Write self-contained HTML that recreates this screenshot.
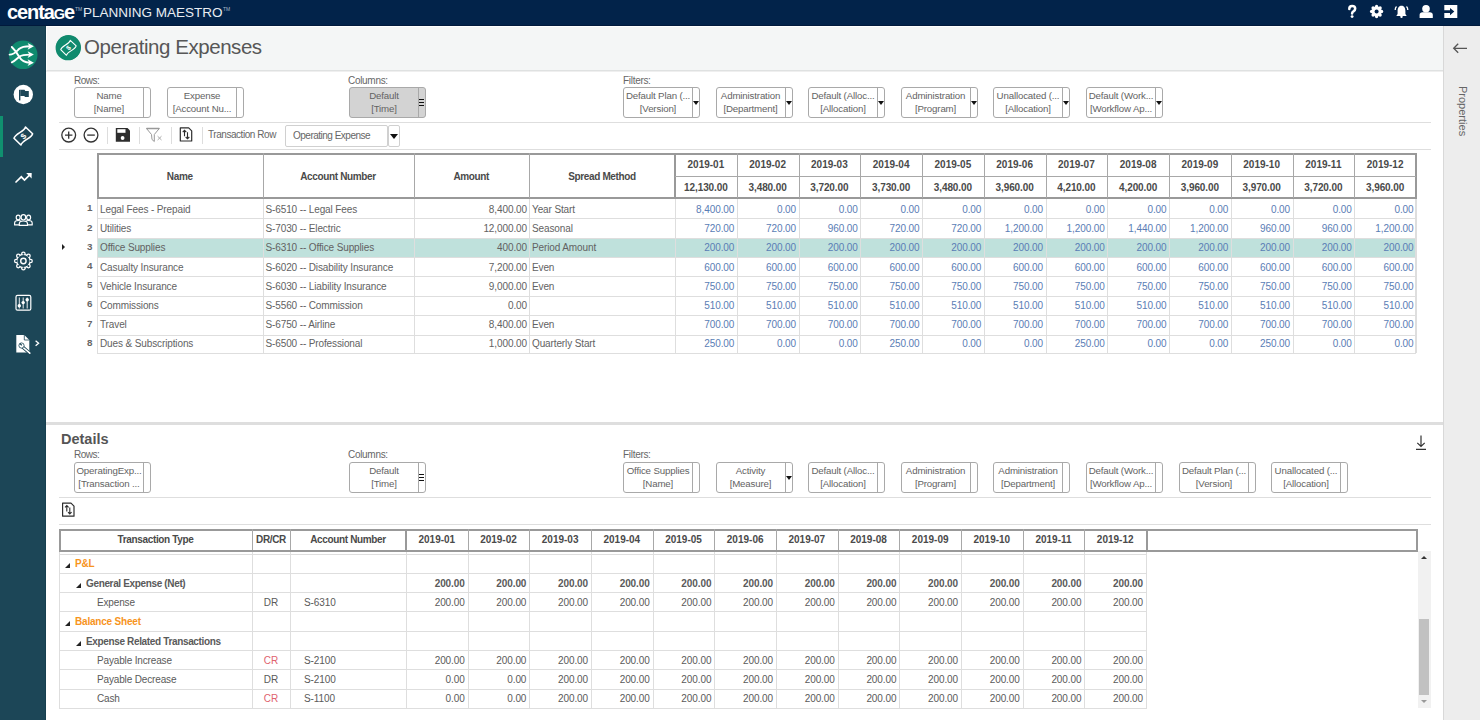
<!DOCTYPE html><html><head><meta charset="utf-8"><style>
*{box-sizing:border-box;margin:0;padding:0}
html,body{width:1480px;height:720px;overflow:hidden;background:#fff;font-family:"Liberation Sans", sans-serif;color:#555}
.abs{position:absolute}
.t{position:absolute;white-space:nowrap;font-size:10px;line-height:12px}
.pill{position:absolute;height:31px;width:77px;border:1px solid #a9a9a9;border-radius:3px;background:#fff}
.pill .d{position:absolute;right:6px;top:0;bottom:0;border-left:1px solid #a9a9a9}
.pill .l{position:absolute;left:0;right:7px;text-align:center;font-size:9.7px;line-height:13px;color:#636363;white-space:nowrap;overflow:hidden;letter-spacing:-0.15px}
.pill .tri{position:absolute;right:0px;top:13px;width:0;height:0;border-left:3.5px solid transparent;border-right:3.5px solid transparent;border-top:4px solid #111}
.gl{position:absolute;background:#dedede}
.bl{position:absolute;background:#8c8c8c}
</style></head><body>

<div class="abs" style="left:0;top:0;width:1480px;height:26px;background:#02234a;border-bottom:1px solid #011a3c"></div>
<div class="t" style="left:7px;top:0px;font-size:20px;line-height:24px;font-weight:bold;color:#fff;letter-spacing:-1.1px">centa<span style="font-size:14.5px">G</span>e</div>
<div class="t" style="left:75px;top:6px;font-size:5px;line-height:6px;color:#a9b5c6">TM</div>
<div class="t" style="left:83px;top:5px;font-size:13.5px;line-height:16px;color:#e9edf2">PLANNING MAESTRO</div>
<div class="t" style="left:223px;top:6px;font-size:5px;line-height:6px;color:#a9b5c6">TM</div>
<div class="abs" style="left:0;top:26px;width:46px;height:694px;background:#1c4657;border-right:1px solid #163f4f"></div>
<div class="abs" style="left:0;top:116px;width:3px;height:41px;background:#10906f"></div>
<div class="abs" style="left:46px;top:26px;width:1397px;height:45px;background:#f4f6f6;border-top:1px solid #fff;border-left:1px solid #fff;border-bottom:1px solid #dfe1e1;box-shadow:0 1px 0 #efefef"></div>
<div class="abs" style="left:1443px;top:26px;width:37px;height:694px;background:#ededed;border-left:1px solid #d8d8d8"></div>
<svg class="abs" style="left:1450px;top:40px" width="20" height="16" viewBox="1450 40 20 16"><path d="M1453.6 48.3 H1467 M1458.2 43.8 L1453.7 48.3 L1458.2 52.8" fill="none" stroke="#555" stroke-width="1.3"/></svg>
<div class="t" style="left:1456px;top:86px;font-size:11px;line-height:14px;color:#666;transform-origin:0 0;transform:translate(14px,0) rotate(90deg)">Properties</div>
<div class="abs" style="left:56px;top:35px;width:25px;height:25px;border-radius:50%;background:#12876b"></div>
<div class="t" style="left:84px;top:35px;font-size:20.5px;line-height:24px;color:#575757;letter-spacing:-0.45px">Operating Expenses</div>
<div class="t" style="left:74px;top:74.5px;color:#666;letter-spacing:-0.5px">Rows:</div>
<div class="t" style="left:348px;top:74.5px;color:#666;letter-spacing:-0.3px">Columns:</div>
<div class="t" style="left:623px;top:74.5px;color:#666;letter-spacing:-0.3px">Filters:</div>
<div class="pill" style="left:74px;top:87px;background:#fff"><div class="d"></div><div class="l" style="top:1.3px">Name</div><div class="l" style="top:13.9px">[Name]</div></div>
<div class="pill" style="left:167px;top:87px;background:#fff"><div class="d"></div><div class="l" style="top:1.3px">Expense</div><div class="l" style="top:13.9px">[Account Nu...</div></div>
<div class="pill" style="left:349px;top:87px;background:#d3d3d3"><div class="d"></div><div class="l" style="top:1.3px">Default</div><div class="l" style="top:13.9px">[Time]</div><div class="abs" style="right:1px;top:11px;width:5px;height:7px;border-top:1.5px solid #111;border-bottom:1.5px solid #111"><div class="abs" style="left:0;top:1.5px;width:5px;height:1.5px;background:#111"></div></div></div>
<div class="pill" style="left:623px;top:87px;background:#fff"><div class="d"></div><div class="l" style="top:1.3px">Default Plan (...</div><div class="l" style="top:13.9px">[Version]</div><div class="tri"></div></div>
<div class="pill" style="left:715.5px;top:87px;background:#fff"><div class="d"></div><div class="l" style="top:1.3px">Administration</div><div class="l" style="top:13.9px">[Department]</div><div class="tri"></div></div>
<div class="pill" style="left:808px;top:87px;background:#fff"><div class="d"></div><div class="l" style="top:1.3px">Default (Alloc...</div><div class="l" style="top:13.9px">[Allocation]</div><div class="tri"></div></div>
<div class="pill" style="left:900.5px;top:87px;background:#fff"><div class="d"></div><div class="l" style="top:1.3px">Administration</div><div class="l" style="top:13.9px">[Program]</div><div class="tri"></div></div>
<div class="pill" style="left:993px;top:87px;background:#fff"><div class="d"></div><div class="l" style="top:1.3px">Unallocated (...</div><div class="l" style="top:13.9px">[Allocation]</div><div class="tri"></div></div>
<div class="pill" style="left:1086px;top:87px;background:#fff"><div class="d"></div><div class="l" style="top:1.3px">Default (Work...</div><div class="l" style="top:13.9px">[Workflow Ap...</div><div class="tri"></div></div>
<div class="gl" style="left:59px;top:122px;width:1372px;height:1px"></div>
<div class="gl" style="left:59px;top:149px;width:1372px;height:1px"></div>
<div class="abs" style="left:107px;top:127px;width:1px;height:17px;background:#ddd"></div>
<div class="abs" style="left:139px;top:127px;width:1px;height:17px;background:#ddd"></div>
<div class="abs" style="left:171px;top:127px;width:1px;height:17px;background:#ddd"></div>
<div class="abs" style="left:202px;top:127px;width:1px;height:17px;background:#ddd"></div>
<div class="t" style="left:208px;top:129px;color:#666;letter-spacing:-0.45px">Transaction Row</div>
<div class="abs" style="left:285px;top:125px;width:103px;height:22px;border:1px solid #d0d0d0;border-radius:2px"></div>
<div class="t" style="left:293px;top:130px;color:#666;letter-spacing:-0.5px">Operating Expense</div>
<div class="abs" style="left:388px;top:125px;width:12px;height:22px;border:1px solid #d0d0d0;border-radius:2px"></div>
<div class="abs" style="left:390px;top:134px;width:0;height:0;border-left:4px solid transparent;border-right:4px solid transparent;border-top:5px solid #111"></div>
<div class="abs" style="left:98px;top:238.1px;width:1317px;height:19.400000000000006px;background:#bfe1dc"></div>
<div class="gl" style="left:97px;top:218.00px;width:1319px;height:1px"></div>
<div class="gl" style="left:97px;top:237.60px;width:1319px;height:1px"></div>
<div class="gl" style="left:97px;top:257.00px;width:1319px;height:1px"></div>
<div class="gl" style="left:97px;top:276.30px;width:1319px;height:1px"></div>
<div class="gl" style="left:97px;top:295.80px;width:1319px;height:1px"></div>
<div class="gl" style="left:97px;top:315.30px;width:1319px;height:1px"></div>
<div class="gl" style="left:97px;top:334.60px;width:1319px;height:1px"></div>
<div class="gl" style="left:97px;top:352.60px;width:1319px;height:1px"></div>
<div class="gl" style="left:97.00px;top:198px;width:1px;height:154.60px"></div>
<div class="gl" style="left:262.50px;top:198px;width:1px;height:154.60px"></div>
<div class="gl" style="left:413.50px;top:198px;width:1px;height:154.60px"></div>
<div class="gl" style="left:529.00px;top:198px;width:1px;height:154.60px"></div>
<div class="gl" style="left:675.00px;top:198px;width:1px;height:154.60px"></div>
<div class="gl" style="left:736.75px;top:198px;width:1px;height:154.60px"></div>
<div class="gl" style="left:798.50px;top:198px;width:1px;height:154.60px"></div>
<div class="gl" style="left:860.25px;top:198px;width:1px;height:154.60px"></div>
<div class="gl" style="left:922.00px;top:198px;width:1px;height:154.60px"></div>
<div class="gl" style="left:983.75px;top:198px;width:1px;height:154.60px"></div>
<div class="gl" style="left:1045.50px;top:198px;width:1px;height:154.60px"></div>
<div class="gl" style="left:1107.25px;top:198px;width:1px;height:154.60px"></div>
<div class="gl" style="left:1169.00px;top:198px;width:1px;height:154.60px"></div>
<div class="gl" style="left:1230.75px;top:198px;width:1px;height:154.60px"></div>
<div class="gl" style="left:1292.50px;top:198px;width:1px;height:154.60px"></div>
<div class="gl" style="left:1354.25px;top:198px;width:1px;height:154.60px"></div>
<div class="gl" style="left:1416.00px;top:198px;width:1px;height:154.60px"></div>
<div class="gl" style="left:1415px;top:198px;width:1px;height:154.60px"></div>
<div class="abs" style="left:97px;top:153px;width:1320px;height:46px;border:2px solid #999"></div>
<div class="abs" style="left:262.50px;top:153px;width:1px;height:45px;background:#a8a8a8"></div>
<div class="abs" style="left:413.50px;top:153px;width:1px;height:45px;background:#a8a8a8"></div>
<div class="abs" style="left:529.00px;top:153px;width:1px;height:45px;background:#a8a8a8"></div>
<div class="abs" style="left:674px;top:153px;width:2px;height:45px;background:#999"></div>
<div class="abs" style="left:736.75px;top:153px;width:1px;height:45px;background:#a8a8a8"></div>
<div class="abs" style="left:798.50px;top:153px;width:1px;height:45px;background:#a8a8a8"></div>
<div class="abs" style="left:860.25px;top:153px;width:1px;height:45px;background:#a8a8a8"></div>
<div class="abs" style="left:922.00px;top:153px;width:1px;height:45px;background:#a8a8a8"></div>
<div class="abs" style="left:983.75px;top:153px;width:1px;height:45px;background:#a8a8a8"></div>
<div class="abs" style="left:1045.50px;top:153px;width:1px;height:45px;background:#a8a8a8"></div>
<div class="abs" style="left:1107.25px;top:153px;width:1px;height:45px;background:#a8a8a8"></div>
<div class="abs" style="left:1169.00px;top:153px;width:1px;height:45px;background:#a8a8a8"></div>
<div class="abs" style="left:1230.75px;top:153px;width:1px;height:45px;background:#a8a8a8"></div>
<div class="abs" style="left:1292.50px;top:153px;width:1px;height:45px;background:#a8a8a8"></div>
<div class="abs" style="left:1354.25px;top:153px;width:1px;height:45px;background:#a8a8a8"></div>
<div class="abs" style="left:675px;top:176px;width:741px;height:1px;background:#a8a8a8"></div>
<div class="t" style="left:97.00px;top:170.5px;width:165.50px;text-align:center;font-weight:bold;color:#4a4a4a;letter-spacing:-0.35px">Name</div>
<div class="t" style="left:262.50px;top:170.5px;width:151.00px;text-align:center;font-weight:bold;color:#4a4a4a;letter-spacing:-0.35px">Account Number</div>
<div class="t" style="left:413.50px;top:170.5px;width:115.50px;text-align:center;font-weight:bold;color:#4a4a4a;letter-spacing:-0.35px">Amount</div>
<div class="t" style="left:529.00px;top:170.5px;width:146.00px;text-align:center;font-weight:bold;color:#4a4a4a;letter-spacing:-0.35px">Spread Method</div>
<div class="t" style="left:675.00px;top:159px;width:61.75px;text-align:center;font-weight:bold;color:#4a4a4a;letter-spacing:0px">2019-01</div>
<div class="t" style="left:675.00px;top:182px;width:61.75px;text-align:center;font-weight:bold;color:#4a4a4a;letter-spacing:-0.1px">12,130.00</div>
<div class="t" style="left:736.75px;top:159px;width:61.75px;text-align:center;font-weight:bold;color:#4a4a4a;letter-spacing:0px">2019-02</div>
<div class="t" style="left:736.75px;top:182px;width:61.75px;text-align:center;font-weight:bold;color:#4a4a4a;letter-spacing:-0.1px">3,480.00</div>
<div class="t" style="left:798.50px;top:159px;width:61.75px;text-align:center;font-weight:bold;color:#4a4a4a;letter-spacing:0px">2019-03</div>
<div class="t" style="left:798.50px;top:182px;width:61.75px;text-align:center;font-weight:bold;color:#4a4a4a;letter-spacing:-0.1px">3,720.00</div>
<div class="t" style="left:860.25px;top:159px;width:61.75px;text-align:center;font-weight:bold;color:#4a4a4a;letter-spacing:0px">2019-04</div>
<div class="t" style="left:860.25px;top:182px;width:61.75px;text-align:center;font-weight:bold;color:#4a4a4a;letter-spacing:-0.1px">3,730.00</div>
<div class="t" style="left:922.00px;top:159px;width:61.75px;text-align:center;font-weight:bold;color:#4a4a4a;letter-spacing:0px">2019-05</div>
<div class="t" style="left:922.00px;top:182px;width:61.75px;text-align:center;font-weight:bold;color:#4a4a4a;letter-spacing:-0.1px">3,480.00</div>
<div class="t" style="left:983.75px;top:159px;width:61.75px;text-align:center;font-weight:bold;color:#4a4a4a;letter-spacing:0px">2019-06</div>
<div class="t" style="left:983.75px;top:182px;width:61.75px;text-align:center;font-weight:bold;color:#4a4a4a;letter-spacing:-0.1px">3,960.00</div>
<div class="t" style="left:1045.50px;top:159px;width:61.75px;text-align:center;font-weight:bold;color:#4a4a4a;letter-spacing:0px">2019-07</div>
<div class="t" style="left:1045.50px;top:182px;width:61.75px;text-align:center;font-weight:bold;color:#4a4a4a;letter-spacing:-0.1px">4,210.00</div>
<div class="t" style="left:1107.25px;top:159px;width:61.75px;text-align:center;font-weight:bold;color:#4a4a4a;letter-spacing:0px">2019-08</div>
<div class="t" style="left:1107.25px;top:182px;width:61.75px;text-align:center;font-weight:bold;color:#4a4a4a;letter-spacing:-0.1px">4,200.00</div>
<div class="t" style="left:1169.00px;top:159px;width:61.75px;text-align:center;font-weight:bold;color:#4a4a4a;letter-spacing:0px">2019-09</div>
<div class="t" style="left:1169.00px;top:182px;width:61.75px;text-align:center;font-weight:bold;color:#4a4a4a;letter-spacing:-0.1px">3,960.00</div>
<div class="t" style="left:1230.75px;top:159px;width:61.75px;text-align:center;font-weight:bold;color:#4a4a4a;letter-spacing:0px">2019-10</div>
<div class="t" style="left:1230.75px;top:182px;width:61.75px;text-align:center;font-weight:bold;color:#4a4a4a;letter-spacing:-0.1px">3,970.00</div>
<div class="t" style="left:1292.50px;top:159px;width:61.75px;text-align:center;font-weight:bold;color:#4a4a4a;letter-spacing:0px">2019-11</div>
<div class="t" style="left:1292.50px;top:182px;width:61.75px;text-align:center;font-weight:bold;color:#4a4a4a;letter-spacing:-0.1px">3,720.00</div>
<div class="t" style="left:1354.25px;top:159px;width:61.75px;text-align:center;font-weight:bold;color:#4a4a4a;letter-spacing:0px">2019-12</div>
<div class="t" style="left:1354.25px;top:182px;width:61.75px;text-align:center;font-weight:bold;color:#4a4a4a;letter-spacing:-0.1px">3,960.00</div>
<div class="t" style="right:1387.50px;top:202.4px;text-align:right;font-weight:bold;color:#666;font-size:9.8px">1</div>
<div class="t" style="left:100.00px;top:203.9px;color:#626262;letter-spacing:-0.12px">Legal Fees - Prepaid</div>
<div class="t" style="left:265.50px;top:203.9px;color:#626262;letter-spacing:-0.12px">S-6510 -- Legal Fees</div>
<div class="t" style="right:953.00px;top:203.9px;text-align:right;color:#626262;letter-spacing:-0.1px">8,400.00</div>
<div class="t" style="left:532.00px;top:203.9px;color:#626262;letter-spacing:-0.12px">Year Start</div>
<div class="t" style="right:745.75px;top:203.9px;text-align:right;color:#5a7db5;letter-spacing:-0.1px">8,400.00</div>
<div class="t" style="right:684.00px;top:203.9px;text-align:right;color:#5a7db5;letter-spacing:-0.1px">0.00</div>
<div class="t" style="right:622.25px;top:203.9px;text-align:right;color:#5a7db5;letter-spacing:-0.1px">0.00</div>
<div class="t" style="right:560.50px;top:203.9px;text-align:right;color:#5a7db5;letter-spacing:-0.1px">0.00</div>
<div class="t" style="right:498.75px;top:203.9px;text-align:right;color:#5a7db5;letter-spacing:-0.1px">0.00</div>
<div class="t" style="right:437.00px;top:203.9px;text-align:right;color:#5a7db5;letter-spacing:-0.1px">0.00</div>
<div class="t" style="right:375.25px;top:203.9px;text-align:right;color:#5a7db5;letter-spacing:-0.1px">0.00</div>
<div class="t" style="right:313.50px;top:203.9px;text-align:right;color:#5a7db5;letter-spacing:-0.1px">0.00</div>
<div class="t" style="right:251.75px;top:203.9px;text-align:right;color:#5a7db5;letter-spacing:-0.1px">0.00</div>
<div class="t" style="right:190.00px;top:203.9px;text-align:right;color:#5a7db5;letter-spacing:-0.1px">0.00</div>
<div class="t" style="right:128.25px;top:203.9px;text-align:right;color:#5a7db5;letter-spacing:-0.1px">0.00</div>
<div class="t" style="right:66.50px;top:203.9px;text-align:right;color:#5a7db5;letter-spacing:-0.1px">0.00</div>
<div class="t" style="right:1387.50px;top:221.6px;text-align:right;font-weight:bold;color:#666;font-size:9.8px">2</div>
<div class="t" style="left:100.00px;top:223.1px;color:#626262;letter-spacing:-0.12px">Utilities</div>
<div class="t" style="left:265.50px;top:223.1px;color:#626262;letter-spacing:-0.12px">S-7030 -- Electric</div>
<div class="t" style="right:953.00px;top:223.1px;text-align:right;color:#626262;letter-spacing:-0.1px">12,000.00</div>
<div class="t" style="left:532.00px;top:223.1px;color:#626262;letter-spacing:-0.12px">Seasonal</div>
<div class="t" style="right:745.75px;top:223.1px;text-align:right;color:#5a7db5;letter-spacing:-0.1px">720.00</div>
<div class="t" style="right:684.00px;top:223.1px;text-align:right;color:#5a7db5;letter-spacing:-0.1px">720.00</div>
<div class="t" style="right:622.25px;top:223.1px;text-align:right;color:#5a7db5;letter-spacing:-0.1px">960.00</div>
<div class="t" style="right:560.50px;top:223.1px;text-align:right;color:#5a7db5;letter-spacing:-0.1px">720.00</div>
<div class="t" style="right:498.75px;top:223.1px;text-align:right;color:#5a7db5;letter-spacing:-0.1px">720.00</div>
<div class="t" style="right:437.00px;top:223.1px;text-align:right;color:#5a7db5;letter-spacing:-0.1px">1,200.00</div>
<div class="t" style="right:375.25px;top:223.1px;text-align:right;color:#5a7db5;letter-spacing:-0.1px">1,200.00</div>
<div class="t" style="right:313.50px;top:223.1px;text-align:right;color:#5a7db5;letter-spacing:-0.1px">1,440.00</div>
<div class="t" style="right:251.75px;top:223.1px;text-align:right;color:#5a7db5;letter-spacing:-0.1px">1,200.00</div>
<div class="t" style="right:190.00px;top:223.1px;text-align:right;color:#5a7db5;letter-spacing:-0.1px">960.00</div>
<div class="t" style="right:128.25px;top:223.1px;text-align:right;color:#5a7db5;letter-spacing:-0.1px">960.00</div>
<div class="t" style="right:66.50px;top:223.1px;text-align:right;color:#5a7db5;letter-spacing:-0.1px">1,200.00</div>
<div class="t" style="right:1387.50px;top:240.8px;text-align:right;font-weight:bold;color:#666;font-size:9.8px">3</div>
<div class="t" style="left:100.00px;top:242.3px;color:#626262;letter-spacing:-0.12px">Office Supplies</div>
<div class="t" style="left:265.50px;top:242.3px;color:#626262;letter-spacing:-0.12px">S-6310 -- Office Supplies</div>
<div class="t" style="right:953.00px;top:242.3px;text-align:right;color:#626262;letter-spacing:-0.1px">400.00</div>
<div class="t" style="left:532.00px;top:242.3px;color:#626262;letter-spacing:-0.12px">Period Amount</div>
<div class="t" style="right:745.75px;top:242.3px;text-align:right;color:#5a7db5;letter-spacing:-0.1px">200.00</div>
<div class="t" style="right:684.00px;top:242.3px;text-align:right;color:#5a7db5;letter-spacing:-0.1px">200.00</div>
<div class="t" style="right:622.25px;top:242.3px;text-align:right;color:#5a7db5;letter-spacing:-0.1px">200.00</div>
<div class="t" style="right:560.50px;top:242.3px;text-align:right;color:#5a7db5;letter-spacing:-0.1px">200.00</div>
<div class="t" style="right:498.75px;top:242.3px;text-align:right;color:#5a7db5;letter-spacing:-0.1px">200.00</div>
<div class="t" style="right:437.00px;top:242.3px;text-align:right;color:#5a7db5;letter-spacing:-0.1px">200.00</div>
<div class="t" style="right:375.25px;top:242.3px;text-align:right;color:#5a7db5;letter-spacing:-0.1px">200.00</div>
<div class="t" style="right:313.50px;top:242.3px;text-align:right;color:#5a7db5;letter-spacing:-0.1px">200.00</div>
<div class="t" style="right:251.75px;top:242.3px;text-align:right;color:#5a7db5;letter-spacing:-0.1px">200.00</div>
<div class="t" style="right:190.00px;top:242.3px;text-align:right;color:#5a7db5;letter-spacing:-0.1px">200.00</div>
<div class="t" style="right:128.25px;top:242.3px;text-align:right;color:#5a7db5;letter-spacing:-0.1px">200.00</div>
<div class="t" style="right:66.50px;top:242.3px;text-align:right;color:#5a7db5;letter-spacing:-0.1px">200.00</div>
<div class="t" style="right:1387.50px;top:260.0px;text-align:right;font-weight:bold;color:#666;font-size:9.8px">4</div>
<div class="t" style="left:100.00px;top:261.5px;color:#626262;letter-spacing:-0.12px">Casualty Insurance</div>
<div class="t" style="left:265.50px;top:261.5px;color:#626262;letter-spacing:-0.12px">S-6020 -- Disability Insurance</div>
<div class="t" style="right:953.00px;top:261.5px;text-align:right;color:#626262;letter-spacing:-0.1px">7,200.00</div>
<div class="t" style="left:532.00px;top:261.5px;color:#626262;letter-spacing:-0.12px">Even</div>
<div class="t" style="right:745.75px;top:261.5px;text-align:right;color:#5a7db5;letter-spacing:-0.1px">600.00</div>
<div class="t" style="right:684.00px;top:261.5px;text-align:right;color:#5a7db5;letter-spacing:-0.1px">600.00</div>
<div class="t" style="right:622.25px;top:261.5px;text-align:right;color:#5a7db5;letter-spacing:-0.1px">600.00</div>
<div class="t" style="right:560.50px;top:261.5px;text-align:right;color:#5a7db5;letter-spacing:-0.1px">600.00</div>
<div class="t" style="right:498.75px;top:261.5px;text-align:right;color:#5a7db5;letter-spacing:-0.1px">600.00</div>
<div class="t" style="right:437.00px;top:261.5px;text-align:right;color:#5a7db5;letter-spacing:-0.1px">600.00</div>
<div class="t" style="right:375.25px;top:261.5px;text-align:right;color:#5a7db5;letter-spacing:-0.1px">600.00</div>
<div class="t" style="right:313.50px;top:261.5px;text-align:right;color:#5a7db5;letter-spacing:-0.1px">600.00</div>
<div class="t" style="right:251.75px;top:261.5px;text-align:right;color:#5a7db5;letter-spacing:-0.1px">600.00</div>
<div class="t" style="right:190.00px;top:261.5px;text-align:right;color:#5a7db5;letter-spacing:-0.1px">600.00</div>
<div class="t" style="right:128.25px;top:261.5px;text-align:right;color:#5a7db5;letter-spacing:-0.1px">600.00</div>
<div class="t" style="right:66.50px;top:261.5px;text-align:right;color:#5a7db5;letter-spacing:-0.1px">600.00</div>
<div class="t" style="right:1387.50px;top:279.2px;text-align:right;font-weight:bold;color:#666;font-size:9.8px">5</div>
<div class="t" style="left:100.00px;top:280.7px;color:#626262;letter-spacing:-0.12px">Vehicle Insurance</div>
<div class="t" style="left:265.50px;top:280.7px;color:#626262;letter-spacing:-0.12px">S-6030 -- Liability Insurance</div>
<div class="t" style="right:953.00px;top:280.7px;text-align:right;color:#626262;letter-spacing:-0.1px">9,000.00</div>
<div class="t" style="left:532.00px;top:280.7px;color:#626262;letter-spacing:-0.12px">Even</div>
<div class="t" style="right:745.75px;top:280.7px;text-align:right;color:#5a7db5;letter-spacing:-0.1px">750.00</div>
<div class="t" style="right:684.00px;top:280.7px;text-align:right;color:#5a7db5;letter-spacing:-0.1px">750.00</div>
<div class="t" style="right:622.25px;top:280.7px;text-align:right;color:#5a7db5;letter-spacing:-0.1px">750.00</div>
<div class="t" style="right:560.50px;top:280.7px;text-align:right;color:#5a7db5;letter-spacing:-0.1px">750.00</div>
<div class="t" style="right:498.75px;top:280.7px;text-align:right;color:#5a7db5;letter-spacing:-0.1px">750.00</div>
<div class="t" style="right:437.00px;top:280.7px;text-align:right;color:#5a7db5;letter-spacing:-0.1px">750.00</div>
<div class="t" style="right:375.25px;top:280.7px;text-align:right;color:#5a7db5;letter-spacing:-0.1px">750.00</div>
<div class="t" style="right:313.50px;top:280.7px;text-align:right;color:#5a7db5;letter-spacing:-0.1px">750.00</div>
<div class="t" style="right:251.75px;top:280.7px;text-align:right;color:#5a7db5;letter-spacing:-0.1px">750.00</div>
<div class="t" style="right:190.00px;top:280.7px;text-align:right;color:#5a7db5;letter-spacing:-0.1px">750.00</div>
<div class="t" style="right:128.25px;top:280.7px;text-align:right;color:#5a7db5;letter-spacing:-0.1px">750.00</div>
<div class="t" style="right:66.50px;top:280.7px;text-align:right;color:#5a7db5;letter-spacing:-0.1px">750.00</div>
<div class="t" style="right:1387.50px;top:298.4px;text-align:right;font-weight:bold;color:#666;font-size:9.8px">6</div>
<div class="t" style="left:100.00px;top:299.9px;color:#626262;letter-spacing:-0.12px">Commissions</div>
<div class="t" style="left:265.50px;top:299.9px;color:#626262;letter-spacing:-0.12px">S-5560 -- Commission</div>
<div class="t" style="right:953.00px;top:299.9px;text-align:right;color:#626262;letter-spacing:-0.1px">0.00</div>
<div class="t" style="left:532.00px;top:299.9px;color:#626262;letter-spacing:-0.12px"></div>
<div class="t" style="right:745.75px;top:299.9px;text-align:right;color:#5a7db5;letter-spacing:-0.1px">510.00</div>
<div class="t" style="right:684.00px;top:299.9px;text-align:right;color:#5a7db5;letter-spacing:-0.1px">510.00</div>
<div class="t" style="right:622.25px;top:299.9px;text-align:right;color:#5a7db5;letter-spacing:-0.1px">510.00</div>
<div class="t" style="right:560.50px;top:299.9px;text-align:right;color:#5a7db5;letter-spacing:-0.1px">510.00</div>
<div class="t" style="right:498.75px;top:299.9px;text-align:right;color:#5a7db5;letter-spacing:-0.1px">510.00</div>
<div class="t" style="right:437.00px;top:299.9px;text-align:right;color:#5a7db5;letter-spacing:-0.1px">510.00</div>
<div class="t" style="right:375.25px;top:299.9px;text-align:right;color:#5a7db5;letter-spacing:-0.1px">510.00</div>
<div class="t" style="right:313.50px;top:299.9px;text-align:right;color:#5a7db5;letter-spacing:-0.1px">510.00</div>
<div class="t" style="right:251.75px;top:299.9px;text-align:right;color:#5a7db5;letter-spacing:-0.1px">510.00</div>
<div class="t" style="right:190.00px;top:299.9px;text-align:right;color:#5a7db5;letter-spacing:-0.1px">510.00</div>
<div class="t" style="right:128.25px;top:299.9px;text-align:right;color:#5a7db5;letter-spacing:-0.1px">510.00</div>
<div class="t" style="right:66.50px;top:299.9px;text-align:right;color:#5a7db5;letter-spacing:-0.1px">510.00</div>
<div class="t" style="right:1387.50px;top:317.6px;text-align:right;font-weight:bold;color:#666;font-size:9.8px">7</div>
<div class="t" style="left:100.00px;top:319.1px;color:#626262;letter-spacing:-0.12px">Travel</div>
<div class="t" style="left:265.50px;top:319.1px;color:#626262;letter-spacing:-0.12px">S-6750 -- Airline</div>
<div class="t" style="right:953.00px;top:319.1px;text-align:right;color:#626262;letter-spacing:-0.1px">8,400.00</div>
<div class="t" style="left:532.00px;top:319.1px;color:#626262;letter-spacing:-0.12px">Even</div>
<div class="t" style="right:745.75px;top:319.1px;text-align:right;color:#5a7db5;letter-spacing:-0.1px">700.00</div>
<div class="t" style="right:684.00px;top:319.1px;text-align:right;color:#5a7db5;letter-spacing:-0.1px">700.00</div>
<div class="t" style="right:622.25px;top:319.1px;text-align:right;color:#5a7db5;letter-spacing:-0.1px">700.00</div>
<div class="t" style="right:560.50px;top:319.1px;text-align:right;color:#5a7db5;letter-spacing:-0.1px">700.00</div>
<div class="t" style="right:498.75px;top:319.1px;text-align:right;color:#5a7db5;letter-spacing:-0.1px">700.00</div>
<div class="t" style="right:437.00px;top:319.1px;text-align:right;color:#5a7db5;letter-spacing:-0.1px">700.00</div>
<div class="t" style="right:375.25px;top:319.1px;text-align:right;color:#5a7db5;letter-spacing:-0.1px">700.00</div>
<div class="t" style="right:313.50px;top:319.1px;text-align:right;color:#5a7db5;letter-spacing:-0.1px">700.00</div>
<div class="t" style="right:251.75px;top:319.1px;text-align:right;color:#5a7db5;letter-spacing:-0.1px">700.00</div>
<div class="t" style="right:190.00px;top:319.1px;text-align:right;color:#5a7db5;letter-spacing:-0.1px">700.00</div>
<div class="t" style="right:128.25px;top:319.1px;text-align:right;color:#5a7db5;letter-spacing:-0.1px">700.00</div>
<div class="t" style="right:66.50px;top:319.1px;text-align:right;color:#5a7db5;letter-spacing:-0.1px">700.00</div>
<div class="t" style="right:1387.50px;top:336.8px;text-align:right;font-weight:bold;color:#666;font-size:9.8px">8</div>
<div class="t" style="left:100.00px;top:338.3px;color:#626262;letter-spacing:-0.12px">Dues & Subscriptions</div>
<div class="t" style="left:265.50px;top:338.3px;color:#626262;letter-spacing:-0.12px">S-6500 -- Professional</div>
<div class="t" style="right:953.00px;top:338.3px;text-align:right;color:#626262;letter-spacing:-0.1px">1,000.00</div>
<div class="t" style="left:532.00px;top:338.3px;color:#626262;letter-spacing:-0.12px">Quarterly Start</div>
<div class="t" style="right:745.75px;top:338.3px;text-align:right;color:#5a7db5;letter-spacing:-0.1px">250.00</div>
<div class="t" style="right:684.00px;top:338.3px;text-align:right;color:#5a7db5;letter-spacing:-0.1px">0.00</div>
<div class="t" style="right:622.25px;top:338.3px;text-align:right;color:#5a7db5;letter-spacing:-0.1px">0.00</div>
<div class="t" style="right:560.50px;top:338.3px;text-align:right;color:#5a7db5;letter-spacing:-0.1px">250.00</div>
<div class="t" style="right:498.75px;top:338.3px;text-align:right;color:#5a7db5;letter-spacing:-0.1px">0.00</div>
<div class="t" style="right:437.00px;top:338.3px;text-align:right;color:#5a7db5;letter-spacing:-0.1px">0.00</div>
<div class="t" style="right:375.25px;top:338.3px;text-align:right;color:#5a7db5;letter-spacing:-0.1px">250.00</div>
<div class="t" style="right:313.50px;top:338.3px;text-align:right;color:#5a7db5;letter-spacing:-0.1px">0.00</div>
<div class="t" style="right:251.75px;top:338.3px;text-align:right;color:#5a7db5;letter-spacing:-0.1px">0.00</div>
<div class="t" style="right:190.00px;top:338.3px;text-align:right;color:#5a7db5;letter-spacing:-0.1px">250.00</div>
<div class="t" style="right:128.25px;top:338.3px;text-align:right;color:#5a7db5;letter-spacing:-0.1px">0.00</div>
<div class="t" style="right:66.50px;top:338.3px;text-align:right;color:#5a7db5;letter-spacing:-0.1px">0.00</div>
<div class="abs" style="left:62px;top:243.6px;width:0;height:0;border-top:3px solid transparent;border-bottom:3px solid transparent;border-left:3.5px solid #222"></div>
<div class="abs" style="left:46px;top:422px;width:1397px;height:3px;background:#dedede"></div>
<div class="t" style="left:61px;top:431px;font-size:14.5px;line-height:16px;font-weight:bold;color:#555">Details</div>
<div class="t" style="left:74px;top:449px;color:#666;letter-spacing:-0.5px">Rows:</div>
<div class="t" style="left:348px;top:449px;color:#666;letter-spacing:-0.3px">Columns:</div>
<div class="t" style="left:623px;top:449px;color:#666;letter-spacing:-0.3px">Filters:</div>
<div class="pill" style="left:74px;top:462px;background:#fff"><div class="d"></div><div class="l" style="top:1.3px">OperatingExp...</div><div class="l" style="top:13.9px">[Transaction ...</div></div>
<div class="pill" style="left:349px;top:462px;background:#fff"><div class="d"></div><div class="l" style="top:1.3px">Default</div><div class="l" style="top:13.9px">[Time]</div><div class="abs" style="right:1px;top:11px;width:5px;height:7px;border-top:1.5px solid #111;border-bottom:1.5px solid #111"><div class="abs" style="left:0;top:1.5px;width:5px;height:1.5px;background:#111"></div></div></div>
<div class="pill" style="left:623px;top:462px;background:#fff"><div class="d"></div><div class="l" style="top:1.3px">Office Supplies</div><div class="l" style="top:13.9px">[Name]</div></div>
<div class="pill" style="left:715.5px;top:462px;background:#fff"><div class="d"></div><div class="l" style="top:1.3px">Activity</div><div class="l" style="top:13.9px">[Measure]</div><div class="tri"></div></div>
<div class="pill" style="left:808px;top:462px;background:#fff"><div class="d"></div><div class="l" style="top:1.3px">Default (Alloc...</div><div class="l" style="top:13.9px">[Allocation]</div></div>
<div class="pill" style="left:900.5px;top:462px;background:#fff"><div class="d"></div><div class="l" style="top:1.3px">Administration</div><div class="l" style="top:13.9px">[Program]</div></div>
<div class="pill" style="left:993px;top:462px;background:#fff"><div class="d"></div><div class="l" style="top:1.3px">Administration</div><div class="l" style="top:13.9px">[Department]</div></div>
<div class="pill" style="left:1086px;top:462px;background:#fff"><div class="d"></div><div class="l" style="top:1.3px">Default (Work...</div><div class="l" style="top:13.9px">[Workflow Ap...</div></div>
<div class="pill" style="left:1179px;top:462px;background:#fff"><div class="d"></div><div class="l" style="top:1.3px">Default Plan (...</div><div class="l" style="top:13.9px">[Version]</div></div>
<div class="pill" style="left:1271px;top:462px;background:#fff"><div class="d"></div><div class="l" style="top:1.3px">Unallocated (...</div><div class="l" style="top:13.9px">[Allocation]</div></div>
<div class="gl" style="left:59px;top:497px;width:1372px;height:1px"></div>
<div class="gl" style="left:59px;top:524px;width:1372px;height:1px"></div>
<div class="gl" style="left:59px;top:553.5px;width:1088px;height:1px"></div>
<div class="gl" style="left:59px;top:572.80px;width:1088px;height:1px"></div>
<div class="gl" style="left:59px;top:592.10px;width:1088px;height:1px"></div>
<div class="gl" style="left:59px;top:611.40px;width:1088px;height:1px"></div>
<div class="gl" style="left:59px;top:630.70px;width:1088px;height:1px"></div>
<div class="gl" style="left:59px;top:650.00px;width:1088px;height:1px"></div>
<div class="gl" style="left:59px;top:669.30px;width:1088px;height:1px"></div>
<div class="gl" style="left:59px;top:688.60px;width:1088px;height:1px"></div>
<div class="gl" style="left:59px;top:707.90px;width:1088px;height:1px"></div>
<div class="gl" style="left:59.00px;top:550px;width:1px;height:158.40px"></div>
<div class="gl" style="left:251.50px;top:550px;width:1px;height:158.40px"></div>
<div class="gl" style="left:290.00px;top:550px;width:1px;height:158.40px"></div>
<div class="gl" style="left:406.00px;top:550px;width:1px;height:158.40px"></div>
<div class="gl" style="left:467.67px;top:550px;width:1px;height:158.40px"></div>
<div class="gl" style="left:529.34px;top:550px;width:1px;height:158.40px"></div>
<div class="gl" style="left:591.01px;top:550px;width:1px;height:158.40px"></div>
<div class="gl" style="left:652.68px;top:550px;width:1px;height:158.40px"></div>
<div class="gl" style="left:714.35px;top:550px;width:1px;height:158.40px"></div>
<div class="gl" style="left:776.02px;top:550px;width:1px;height:158.40px"></div>
<div class="gl" style="left:837.69px;top:550px;width:1px;height:158.40px"></div>
<div class="gl" style="left:899.36px;top:550px;width:1px;height:158.40px"></div>
<div class="gl" style="left:961.03px;top:550px;width:1px;height:158.40px"></div>
<div class="gl" style="left:1022.70px;top:550px;width:1px;height:158.40px"></div>
<div class="gl" style="left:1084.37px;top:550px;width:1px;height:158.40px"></div>
<div class="gl" style="left:1146.04px;top:550px;width:1px;height:158.40px"></div>
<div class="abs" style="left:59px;top:528.5px;width:1359px;height:23.00px;border:2px solid #999"></div>
<div class="abs" style="left:251.50px;top:528.5px;width:1px;height:21.5px;background:#a8a8a8"></div>
<div class="abs" style="left:290.00px;top:528.5px;width:1px;height:21.5px;background:#a8a8a8"></div>
<div class="abs" style="left:405px;top:528.5px;width:2px;height:21.5px;background:#999"></div>
<div class="abs" style="left:467.67px;top:528.5px;width:1px;height:21.5px;background:#a8a8a8"></div>
<div class="abs" style="left:529.34px;top:528.5px;width:1px;height:21.5px;background:#a8a8a8"></div>
<div class="abs" style="left:591.01px;top:528.5px;width:1px;height:21.5px;background:#a8a8a8"></div>
<div class="abs" style="left:652.68px;top:528.5px;width:1px;height:21.5px;background:#a8a8a8"></div>
<div class="abs" style="left:714.35px;top:528.5px;width:1px;height:21.5px;background:#a8a8a8"></div>
<div class="abs" style="left:776.02px;top:528.5px;width:1px;height:21.5px;background:#a8a8a8"></div>
<div class="abs" style="left:837.69px;top:528.5px;width:1px;height:21.5px;background:#a8a8a8"></div>
<div class="abs" style="left:899.36px;top:528.5px;width:1px;height:21.5px;background:#a8a8a8"></div>
<div class="abs" style="left:961.03px;top:528.5px;width:1px;height:21.5px;background:#a8a8a8"></div>
<div class="abs" style="left:1022.70px;top:528.5px;width:1px;height:21.5px;background:#a8a8a8"></div>
<div class="abs" style="left:1084.37px;top:528.5px;width:1px;height:21.5px;background:#a8a8a8"></div>
<div class="abs" style="left:1146.04px;top:528.5px;width:1px;height:21.5px;background:#a8a8a8"></div>
<div class="abs" style="left:1145.5px;top:528.5px;width:2px;height:21.5px;background:#999"></div>
<div class="t" style="left:59.00px;top:534px;width:193.00px;text-align:center;font-weight:bold;color:#4a4a4a;letter-spacing:-0.35px">Transaction Type</div>
<div class="t" style="left:252.00px;top:534px;width:38.00px;text-align:center;font-weight:bold;color:#4a4a4a;letter-spacing:-0.35px">DR/CR</div>
<div class="t" style="left:290.00px;top:534px;width:116.00px;text-align:center;font-weight:bold;color:#4a4a4a;letter-spacing:-0.35px">Account Number</div>
<div class="t" style="left:406.00px;top:534px;width:61.67px;text-align:center;font-weight:bold;color:#4a4a4a;letter-spacing:0px">2019-01</div>
<div class="t" style="left:467.67px;top:534px;width:61.67px;text-align:center;font-weight:bold;color:#4a4a4a;letter-spacing:0px">2019-02</div>
<div class="t" style="left:529.34px;top:534px;width:61.67px;text-align:center;font-weight:bold;color:#4a4a4a;letter-spacing:0px">2019-03</div>
<div class="t" style="left:591.01px;top:534px;width:61.67px;text-align:center;font-weight:bold;color:#4a4a4a;letter-spacing:0px">2019-04</div>
<div class="t" style="left:652.68px;top:534px;width:61.67px;text-align:center;font-weight:bold;color:#4a4a4a;letter-spacing:0px">2019-05</div>
<div class="t" style="left:714.35px;top:534px;width:61.67px;text-align:center;font-weight:bold;color:#4a4a4a;letter-spacing:0px">2019-06</div>
<div class="t" style="left:776.02px;top:534px;width:61.67px;text-align:center;font-weight:bold;color:#4a4a4a;letter-spacing:0px">2019-07</div>
<div class="t" style="left:837.69px;top:534px;width:61.67px;text-align:center;font-weight:bold;color:#4a4a4a;letter-spacing:0px">2019-08</div>
<div class="t" style="left:899.36px;top:534px;width:61.67px;text-align:center;font-weight:bold;color:#4a4a4a;letter-spacing:0px">2019-09</div>
<div class="t" style="left:961.03px;top:534px;width:61.67px;text-align:center;font-weight:bold;color:#4a4a4a;letter-spacing:0px">2019-10</div>
<div class="t" style="left:1022.70px;top:534px;width:61.67px;text-align:center;font-weight:bold;color:#4a4a4a;letter-spacing:0px">2019-11</div>
<div class="t" style="left:1084.37px;top:534px;width:61.67px;text-align:center;font-weight:bold;color:#4a4a4a;letter-spacing:0px">2019-12</div>
<div class="abs" style="left:65px;top:563.3px;width:0;height:0;border-left:5px solid transparent;border-bottom:5px solid #222"></div>
<div class="t" style="left:75.00px;top:558.3px;font-weight:bold;color:#f7941d;letter-spacing:-0.2px">P&amp;L</div>
<div class="abs" style="left:76px;top:582.5999999999999px;width:0;height:0;border-left:5px solid transparent;border-bottom:5px solid #222"></div>
<div class="t" style="left:86.00px;top:577.5999999999999px;font-weight:bold;color:#5a5a5a;letter-spacing:-0.35px">General Expense (Net)</div>
<div class="t" style="right:1015.33px;top:577.5999999999999px;text-align:right;font-weight:bold;color:#5a5a5a;letter-spacing:-0.1px">200.00</div>
<div class="t" style="right:953.66px;top:577.5999999999999px;text-align:right;font-weight:bold;color:#5a5a5a;letter-spacing:-0.1px">200.00</div>
<div class="t" style="right:891.99px;top:577.5999999999999px;text-align:right;font-weight:bold;color:#5a5a5a;letter-spacing:-0.1px">200.00</div>
<div class="t" style="right:830.32px;top:577.5999999999999px;text-align:right;font-weight:bold;color:#5a5a5a;letter-spacing:-0.1px">200.00</div>
<div class="t" style="right:768.65px;top:577.5999999999999px;text-align:right;font-weight:bold;color:#5a5a5a;letter-spacing:-0.1px">200.00</div>
<div class="t" style="right:706.98px;top:577.5999999999999px;text-align:right;font-weight:bold;color:#5a5a5a;letter-spacing:-0.1px">200.00</div>
<div class="t" style="right:645.31px;top:577.5999999999999px;text-align:right;font-weight:bold;color:#5a5a5a;letter-spacing:-0.1px">200.00</div>
<div class="t" style="right:583.64px;top:577.5999999999999px;text-align:right;font-weight:bold;color:#5a5a5a;letter-spacing:-0.1px">200.00</div>
<div class="t" style="right:521.97px;top:577.5999999999999px;text-align:right;font-weight:bold;color:#5a5a5a;letter-spacing:-0.1px">200.00</div>
<div class="t" style="right:460.30px;top:577.5999999999999px;text-align:right;font-weight:bold;color:#5a5a5a;letter-spacing:-0.1px">200.00</div>
<div class="t" style="right:398.63px;top:577.5999999999999px;text-align:right;font-weight:bold;color:#5a5a5a;letter-spacing:-0.1px">200.00</div>
<div class="t" style="right:336.96px;top:577.5999999999999px;text-align:right;font-weight:bold;color:#5a5a5a;letter-spacing:-0.1px">200.00</div>
<div class="t" style="left:97.00px;top:596.9px;color:#5a5a5a;letter-spacing:-0.15px">Expense</div>
<div class="t" style="left:252.00px;top:596.9px;width:38.00px;text-align:center;color:#5a5a5a">DR</div>
<div class="t" style="left:304.00px;top:596.9px;color:#5a5a5a;letter-spacing:-0.1px">S-6310</div>
<div class="t" style="right:1015.33px;top:596.9px;text-align:right;color:#5a5a5a;letter-spacing:-0.1px">200.00</div>
<div class="t" style="right:953.66px;top:596.9px;text-align:right;color:#5a5a5a;letter-spacing:-0.1px">200.00</div>
<div class="t" style="right:891.99px;top:596.9px;text-align:right;color:#5a5a5a;letter-spacing:-0.1px">200.00</div>
<div class="t" style="right:830.32px;top:596.9px;text-align:right;color:#5a5a5a;letter-spacing:-0.1px">200.00</div>
<div class="t" style="right:768.65px;top:596.9px;text-align:right;color:#5a5a5a;letter-spacing:-0.1px">200.00</div>
<div class="t" style="right:706.98px;top:596.9px;text-align:right;color:#5a5a5a;letter-spacing:-0.1px">200.00</div>
<div class="t" style="right:645.31px;top:596.9px;text-align:right;color:#5a5a5a;letter-spacing:-0.1px">200.00</div>
<div class="t" style="right:583.64px;top:596.9px;text-align:right;color:#5a5a5a;letter-spacing:-0.1px">200.00</div>
<div class="t" style="right:521.97px;top:596.9px;text-align:right;color:#5a5a5a;letter-spacing:-0.1px">200.00</div>
<div class="t" style="right:460.30px;top:596.9px;text-align:right;color:#5a5a5a;letter-spacing:-0.1px">200.00</div>
<div class="t" style="right:398.63px;top:596.9px;text-align:right;color:#5a5a5a;letter-spacing:-0.1px">200.00</div>
<div class="t" style="right:336.96px;top:596.9px;text-align:right;color:#5a5a5a;letter-spacing:-0.1px">200.00</div>
<div class="abs" style="left:65px;top:621.1999999999999px;width:0;height:0;border-left:5px solid transparent;border-bottom:5px solid #222"></div>
<div class="t" style="left:75.00px;top:616.1999999999999px;font-weight:bold;color:#f7941d;letter-spacing:-0.2px">Balance Sheet</div>
<div class="abs" style="left:76px;top:640.5px;width:0;height:0;border-left:5px solid transparent;border-bottom:5px solid #222"></div>
<div class="t" style="left:86.00px;top:635.5px;font-weight:bold;color:#5a5a5a;letter-spacing:-0.35px">Expense Related Transactions</div>
<div class="t" style="left:97.00px;top:654.8px;color:#5a5a5a;letter-spacing:-0.15px">Payable Increase</div>
<div class="t" style="left:252.00px;top:654.8px;width:38.00px;text-align:center;color:#e0636e">CR</div>
<div class="t" style="left:304.00px;top:654.8px;color:#5a5a5a;letter-spacing:-0.1px">S-2100</div>
<div class="t" style="right:1015.33px;top:654.8px;text-align:right;color:#5a5a5a;letter-spacing:-0.1px">200.00</div>
<div class="t" style="right:953.66px;top:654.8px;text-align:right;color:#5a5a5a;letter-spacing:-0.1px">200.00</div>
<div class="t" style="right:891.99px;top:654.8px;text-align:right;color:#5a5a5a;letter-spacing:-0.1px">200.00</div>
<div class="t" style="right:830.32px;top:654.8px;text-align:right;color:#5a5a5a;letter-spacing:-0.1px">200.00</div>
<div class="t" style="right:768.65px;top:654.8px;text-align:right;color:#5a5a5a;letter-spacing:-0.1px">200.00</div>
<div class="t" style="right:706.98px;top:654.8px;text-align:right;color:#5a5a5a;letter-spacing:-0.1px">200.00</div>
<div class="t" style="right:645.31px;top:654.8px;text-align:right;color:#5a5a5a;letter-spacing:-0.1px">200.00</div>
<div class="t" style="right:583.64px;top:654.8px;text-align:right;color:#5a5a5a;letter-spacing:-0.1px">200.00</div>
<div class="t" style="right:521.97px;top:654.8px;text-align:right;color:#5a5a5a;letter-spacing:-0.1px">200.00</div>
<div class="t" style="right:460.30px;top:654.8px;text-align:right;color:#5a5a5a;letter-spacing:-0.1px">200.00</div>
<div class="t" style="right:398.63px;top:654.8px;text-align:right;color:#5a5a5a;letter-spacing:-0.1px">200.00</div>
<div class="t" style="right:336.96px;top:654.8px;text-align:right;color:#5a5a5a;letter-spacing:-0.1px">200.00</div>
<div class="t" style="left:97.00px;top:674.0999999999999px;color:#5a5a5a;letter-spacing:-0.15px">Payable Decrease</div>
<div class="t" style="left:252.00px;top:674.0999999999999px;width:38.00px;text-align:center;color:#5a5a5a">DR</div>
<div class="t" style="left:304.00px;top:674.0999999999999px;color:#5a5a5a;letter-spacing:-0.1px">S-2100</div>
<div class="t" style="right:1015.33px;top:674.0999999999999px;text-align:right;color:#5a5a5a;letter-spacing:-0.1px">0.00</div>
<div class="t" style="right:953.66px;top:674.0999999999999px;text-align:right;color:#5a5a5a;letter-spacing:-0.1px">0.00</div>
<div class="t" style="right:891.99px;top:674.0999999999999px;text-align:right;color:#5a5a5a;letter-spacing:-0.1px">200.00</div>
<div class="t" style="right:830.32px;top:674.0999999999999px;text-align:right;color:#5a5a5a;letter-spacing:-0.1px">200.00</div>
<div class="t" style="right:768.65px;top:674.0999999999999px;text-align:right;color:#5a5a5a;letter-spacing:-0.1px">200.00</div>
<div class="t" style="right:706.98px;top:674.0999999999999px;text-align:right;color:#5a5a5a;letter-spacing:-0.1px">200.00</div>
<div class="t" style="right:645.31px;top:674.0999999999999px;text-align:right;color:#5a5a5a;letter-spacing:-0.1px">200.00</div>
<div class="t" style="right:583.64px;top:674.0999999999999px;text-align:right;color:#5a5a5a;letter-spacing:-0.1px">200.00</div>
<div class="t" style="right:521.97px;top:674.0999999999999px;text-align:right;color:#5a5a5a;letter-spacing:-0.1px">200.00</div>
<div class="t" style="right:460.30px;top:674.0999999999999px;text-align:right;color:#5a5a5a;letter-spacing:-0.1px">200.00</div>
<div class="t" style="right:398.63px;top:674.0999999999999px;text-align:right;color:#5a5a5a;letter-spacing:-0.1px">200.00</div>
<div class="t" style="right:336.96px;top:674.0999999999999px;text-align:right;color:#5a5a5a;letter-spacing:-0.1px">200.00</div>
<div class="t" style="left:97.00px;top:693.4px;color:#5a5a5a;letter-spacing:-0.15px">Cash</div>
<div class="t" style="left:252.00px;top:693.4px;width:38.00px;text-align:center;color:#e0636e">CR</div>
<div class="t" style="left:304.00px;top:693.4px;color:#5a5a5a;letter-spacing:-0.1px">S-1100</div>
<div class="t" style="right:1015.33px;top:693.4px;text-align:right;color:#5a5a5a;letter-spacing:-0.1px">0.00</div>
<div class="t" style="right:953.66px;top:693.4px;text-align:right;color:#5a5a5a;letter-spacing:-0.1px">0.00</div>
<div class="t" style="right:891.99px;top:693.4px;text-align:right;color:#5a5a5a;letter-spacing:-0.1px">200.00</div>
<div class="t" style="right:830.32px;top:693.4px;text-align:right;color:#5a5a5a;letter-spacing:-0.1px">200.00</div>
<div class="t" style="right:768.65px;top:693.4px;text-align:right;color:#5a5a5a;letter-spacing:-0.1px">200.00</div>
<div class="t" style="right:706.98px;top:693.4px;text-align:right;color:#5a5a5a;letter-spacing:-0.1px">200.00</div>
<div class="t" style="right:645.31px;top:693.4px;text-align:right;color:#5a5a5a;letter-spacing:-0.1px">200.00</div>
<div class="t" style="right:583.64px;top:693.4px;text-align:right;color:#5a5a5a;letter-spacing:-0.1px">200.00</div>
<div class="t" style="right:521.97px;top:693.4px;text-align:right;color:#5a5a5a;letter-spacing:-0.1px">200.00</div>
<div class="t" style="right:460.30px;top:693.4px;text-align:right;color:#5a5a5a;letter-spacing:-0.1px">200.00</div>
<div class="t" style="right:398.63px;top:693.4px;text-align:right;color:#5a5a5a;letter-spacing:-0.1px">200.00</div>
<div class="t" style="right:336.96px;top:693.4px;text-align:right;color:#5a5a5a;letter-spacing:-0.1px">200.00</div>
<div class="abs" style="left:1418px;top:551px;width:13px;height:157px;background:#f1f1f1"></div>
<div class="abs" style="left:1419px;top:619px;width:10px;height:76px;background:#c1c1c1"></div>
<div class="abs" style="left:1421px;top:556px;width:0;height:0;border-left:3px solid transparent;border-right:3px solid transparent;border-bottom:3px solid #333"></div>
<div class="abs" style="left:1421px;top:700px;width:0;height:0;border-left:3px solid transparent;border-right:3px solid transparent;border-top:3px solid #999"></div>
<svg class="abs" style="left:0;top:0" width="1480" height="720" viewBox="0 0 1480 720"><circle cx="23.2" cy="54.8" r="14.3" fill="#0f8a6e"/><g fill="none" stroke="#fff" stroke-width="1.9" stroke-linecap="round"><path d="M9.6 54.6 C14 54.6 16.5 51.5 19 49 C22 46.5 26 46.3 30 46.3"/><path d="M11.8 47 C15 50 17 53 19 56.5 C21 60 25 62.7 30 62.7"/><path d="M11.8 62.3 C15 61 17.5 58 19.5 56.5 C22 54.8 26 54.6 30 54.6"/></g><g fill="#fff"><path d="M33.9 46.3 L27.6 42.9 L29.3 46.3 L27.6 49.7 Z"/><path d="M33.9 54.6 L27.6 51.2 L29.3 54.6 L27.6 58 Z"/><path d="M33.9 62.7 L27.6 59.3 L29.3 62.7 L27.6 66.1 Z"/></g><circle cx="23.3" cy="94.5" r="9.7" fill="#fff"/><rect x="19" y="89.8" width="1.4" height="10.6" fill="#1c4657"/><path d="M20.3 89.8 L24.5 89.8 L25.3 91 L28.8 91 L28.8 97 L25 97 L24.3 96 L20.3 96 Z" fill="#1c4657"/><path d="M25.50 127.00 L32.60 133.75 C31.10 138.75 22.40 140.00 20.90 145.00 L14.00 138.30 C15.50 133.30 24.00 132.00 25.50 127.00 Z" fill="none" stroke="#ffffff" stroke-width="1.6" stroke-linejoin="round"/><text x="23.30" y="138.90" font-family="Liberation Sans" font-weight="bold" font-size="8.00" fill="#ffffff" text-anchor="middle" transform="rotate(-45 23.30 136.00)">$</text><g fill="none" stroke="#fff" stroke-width="1.7" stroke-linecap="round" stroke-linejoin="miter"><path d="M16 182 L21.3 176.8 L24.5 180 L30.5 174.2"/></g><path d="M31.6 173.1 L26.2 173.1 L31.6 178.5 Z" fill="#fff"/><g fill="#1c4657" stroke="#fff" stroke-width="1.2" stroke-linejoin="round"><path d="M14.6 224.9 L14.6 223.2 C14.6 221.3 16.1 220.5 18.2 220.5 C20.3 220.5 21.8 221.3 21.8 223.2 L21.8 224.9 Z"/><path d="M25 224.9 L25 223.2 C25 221.3 26.5 220.5 28.6 220.5 C30.7 220.5 32.2 221.3 32.2 223.2 L32.2 224.9 Z"/><ellipse cx="18.2" cy="217.5" rx="2.0" ry="2.3"/><ellipse cx="28.6" cy="217.5" rx="2.0" ry="2.3"/><path d="M19.3 225.4 L19.3 223.8 C19.3 221.8 21 221 23.4 221 C25.8 221 27.5 221.8 27.5 223.8 L27.5 225.4 Z"/><ellipse cx="23.4" cy="217.3" rx="2.3" ry="2.7"/></g><circle cx="23.4" cy="261" r="7.3" fill="#fff"/><circle cx="30.60" cy="261.00" r="2.3" fill="#fff"/><circle cx="28.49" cy="266.09" r="2.3" fill="#fff"/><circle cx="23.40" cy="268.20" r="2.3" fill="#fff"/><circle cx="18.31" cy="266.09" r="2.3" fill="#fff"/><circle cx="16.20" cy="261.00" r="2.3" fill="#fff"/><circle cx="18.31" cy="255.91" r="2.3" fill="#fff"/><circle cx="23.40" cy="253.80" r="2.3" fill="#fff"/><circle cx="28.49" cy="255.91" r="2.3" fill="#fff"/><circle cx="23.4" cy="261" r="6.1" fill="#1c4657"/><circle cx="30.60" cy="261.00" r="1.05" fill="#1c4657"/><circle cx="28.49" cy="266.09" r="1.05" fill="#1c4657"/><circle cx="23.40" cy="268.20" r="1.05" fill="#1c4657"/><circle cx="18.31" cy="266.09" r="1.05" fill="#1c4657"/><circle cx="16.20" cy="261.00" r="1.05" fill="#1c4657"/><circle cx="18.31" cy="255.91" r="1.05" fill="#1c4657"/><circle cx="23.40" cy="253.80" r="1.05" fill="#1c4657"/><circle cx="28.49" cy="255.91" r="1.05" fill="#1c4657"/><circle cx="23.4" cy="261" r="3.4" fill="#fff"/><circle cx="23.4" cy="261" r="2.0" fill="#1c4657"/><rect x="16" y="295.4" width="14.8" height="14.8" rx="1.5" fill="none" stroke="#fff" stroke-width="1.2"/><g stroke="#fff" stroke-width="0.9"><path d="M19.3 297.5 V308.5 M23.2 297.5 V308.5 M27.2 297.5 V308.5"/></g><g fill="#fff"><circle cx="19.3" cy="305.7" r="1.7"/><circle cx="23.2" cy="302.6" r="1.7"/><circle cx="27.2" cy="299.7" r="1.7"/></g><path d="M16.3 335 L24.3 335 L29.3 340 L29.3 352.4 L16.3 352.4 Z" fill="#fff"/><path d="M24.3 335 L24.3 340 L29.3 340" fill="none" stroke="#1c4657" stroke-width="0.8"/><g fill="none" stroke="#1c4657" stroke-width="3.2" stroke-linecap="round"><path d="M21.5 346 L30 353.5"/></g><g fill="none" stroke="#fff" stroke-width="1.6" stroke-linecap="round"><path d="M22 346.5 L29.8 353.2"/></g><circle cx="21.5" cy="345.5" r="2.6" fill="#fff" stroke="#1c4657" stroke-width="0.8"/><path d="M20 343.5 L21.8 345.4" stroke="#1c4657" stroke-width="1.3"/><path d="M35.6 340.8 L38.6 343.3 L35.6 345.8" fill="none" stroke="#fff" stroke-width="1.3"/><path d="M1349.3 9 C1349.3 6.9 1350.6 6.1 1352.1 6.1 C1353.8 6.1 1355.2 7.1 1355.2 8.7 C1355.2 10.3 1354.1 10.9 1353.2 11.5 C1352.4 12 1352.1 12.6 1352.1 13.6" fill="none" stroke="#fff" stroke-width="2.5" stroke-linecap="round"/><circle cx="1352.1" cy="16.6" r="1.45" fill="#fff"/><circle cx="1376.6" cy="11.5" r="5.0" fill="#fff"/><circle cx="1381.60" cy="11.50" r="1.65" fill="#fff"/><circle cx="1380.14" cy="15.04" r="1.65" fill="#fff"/><circle cx="1376.60" cy="16.50" r="1.65" fill="#fff"/><circle cx="1373.06" cy="15.04" r="1.65" fill="#fff"/><circle cx="1371.60" cy="11.50" r="1.65" fill="#fff"/><circle cx="1373.06" cy="7.96" r="1.65" fill="#fff"/><circle cx="1376.60" cy="6.50" r="1.65" fill="#fff"/><circle cx="1380.14" cy="7.96" r="1.65" fill="#fff"/><circle cx="1376.6" cy="11.5" r="2.0" fill="#02234a"/><path d="M1401.5 5.8 C1398.5 5.8 1397.6 8.5 1397.6 11.5 L1397.6 14 L1396.3 16 L1406.7 16 L1405.4 14 L1405.4 11.5 C1405.4 8.5 1404.5 5.8 1401.5 5.8 Z" fill="#fff"/><circle cx="1401.5" cy="16.8" r="1.2" fill="#fff"/><g fill="none" stroke="#fff" stroke-width="1.3"><path d="M1396.5 6.5 C1395.5 7.5 1395.2 8.5 1395.2 10"/><path d="M1406.5 6.5 C1407.5 7.5 1407.8 8.5 1407.8 10"/></g><circle cx="1426" cy="8.8" r="3.8" fill="#fff"/><path d="M1419.6 18 L1419.6 14.8 C1419.6 13 1420.8 12.2 1422.5 12.2 L1429.9 12.2 C1431.6 12.2 1432.8 13 1432.8 14.8 L1432.8 18 Z" fill="#fff"/><rect x="1444.3" y="5" width="13" height="13" fill="#fff"/><path d="M1444 10.3 L1450 10.3 L1450 8 L1454.3 11.6 L1450 15.2 L1450 12.9 L1444 12.9 Z" fill="#02234a"/><circle cx="68" cy="47.9" r="12.4" fill="#0f8a6e"/><path d="M70.28 40.33 L76.17 45.93 C74.92 50.08 67.70 51.12 66.46 55.27 L60.73 49.71 C61.98 45.56 69.03 44.48 70.28 40.33 Z" fill="none" stroke="#ffffff" stroke-width="1.1" stroke-linejoin="round"/><text x="68.45" y="50.21" font-family="Liberation Sans" font-weight="bold" font-size="6.64" fill="#ffffff" text-anchor="middle" transform="rotate(-45 68.45 47.80)">$</text><g fill="none" stroke="#333" stroke-width="1.3"><circle cx="68.7" cy="135.1" r="6.9"/><path d="M65 135.1 H72.4 M68.7 131.4 V138.8"/><circle cx="91" cy="135.1" r="6.9"/><path d="M87.2 135.1 H94.8"/></g><path d="M115.8 128 L127.5 128 L130 130.5 L130 141.8 L115.8 141.8 Z" fill="#2d2d2d"/><rect x="117.3" y="129.2" width="8.2" height="3.6" fill="#fff"/><circle cx="122.6" cy="138" r="1.9" fill="#fff"/><path d="M146.5 128.5 L159.3 128.5 L154.3 134.5 L154.3 141.5 L152 139.5 L151.5 134.5 Z" fill="none" stroke="#999" stroke-width="1" stroke-linejoin="round"/><path d="M146.5 128.5 L159.3 128.5" stroke="#999" stroke-width="1.5"/><path d="M157.6 136.2 L161.5 140 M161.5 136.2 L157.6 140" stroke="#aaa" stroke-width="1"/><path d="M180.29999999999998 127.89999999999999 L188.7 127.89999999999999 L191.7 130.9 L191.7 141.0 L180.29999999999998 141.0 Z" fill="none" stroke="#2d2d2d" stroke-width="1.2" stroke-linejoin="round"/><path d="M184.5 136.3 V130.3 M182.7 132.1 L184.5 130.3 L186.29999999999998 132.1" fill="none" stroke="#2d2d2d" stroke-width="1.1"/><path d="M187.5 132.3 V138.8 M185.7 137.0 L187.5 138.8 L189.29999999999998 137.0" fill="none" stroke="#2d2d2d" stroke-width="1.1"/><path d="M62.6 503.1 L71 503.1 L74 506.1 L74 516.2 L62.6 516.2 Z" fill="none" stroke="#2d2d2d" stroke-width="1.2" stroke-linejoin="round"/><path d="M66.8 511.5 V505.5 M65 507.3 L66.8 505.5 L68.6 507.3" fill="none" stroke="#2d2d2d" stroke-width="1.1"/><path d="M69.8 507.5 V514.0 M68 512.2 L69.8 514.0 L71.6 512.2" fill="none" stroke="#2d2d2d" stroke-width="1.1"/><g fill="none" stroke="#333" stroke-width="1.2"><path d="M1421 435.5 V446.5 M1417.3 442.8 L1421 446.5 L1424.7 442.8 M1416 449.3 H1426"/></g></svg>
</body></html>
